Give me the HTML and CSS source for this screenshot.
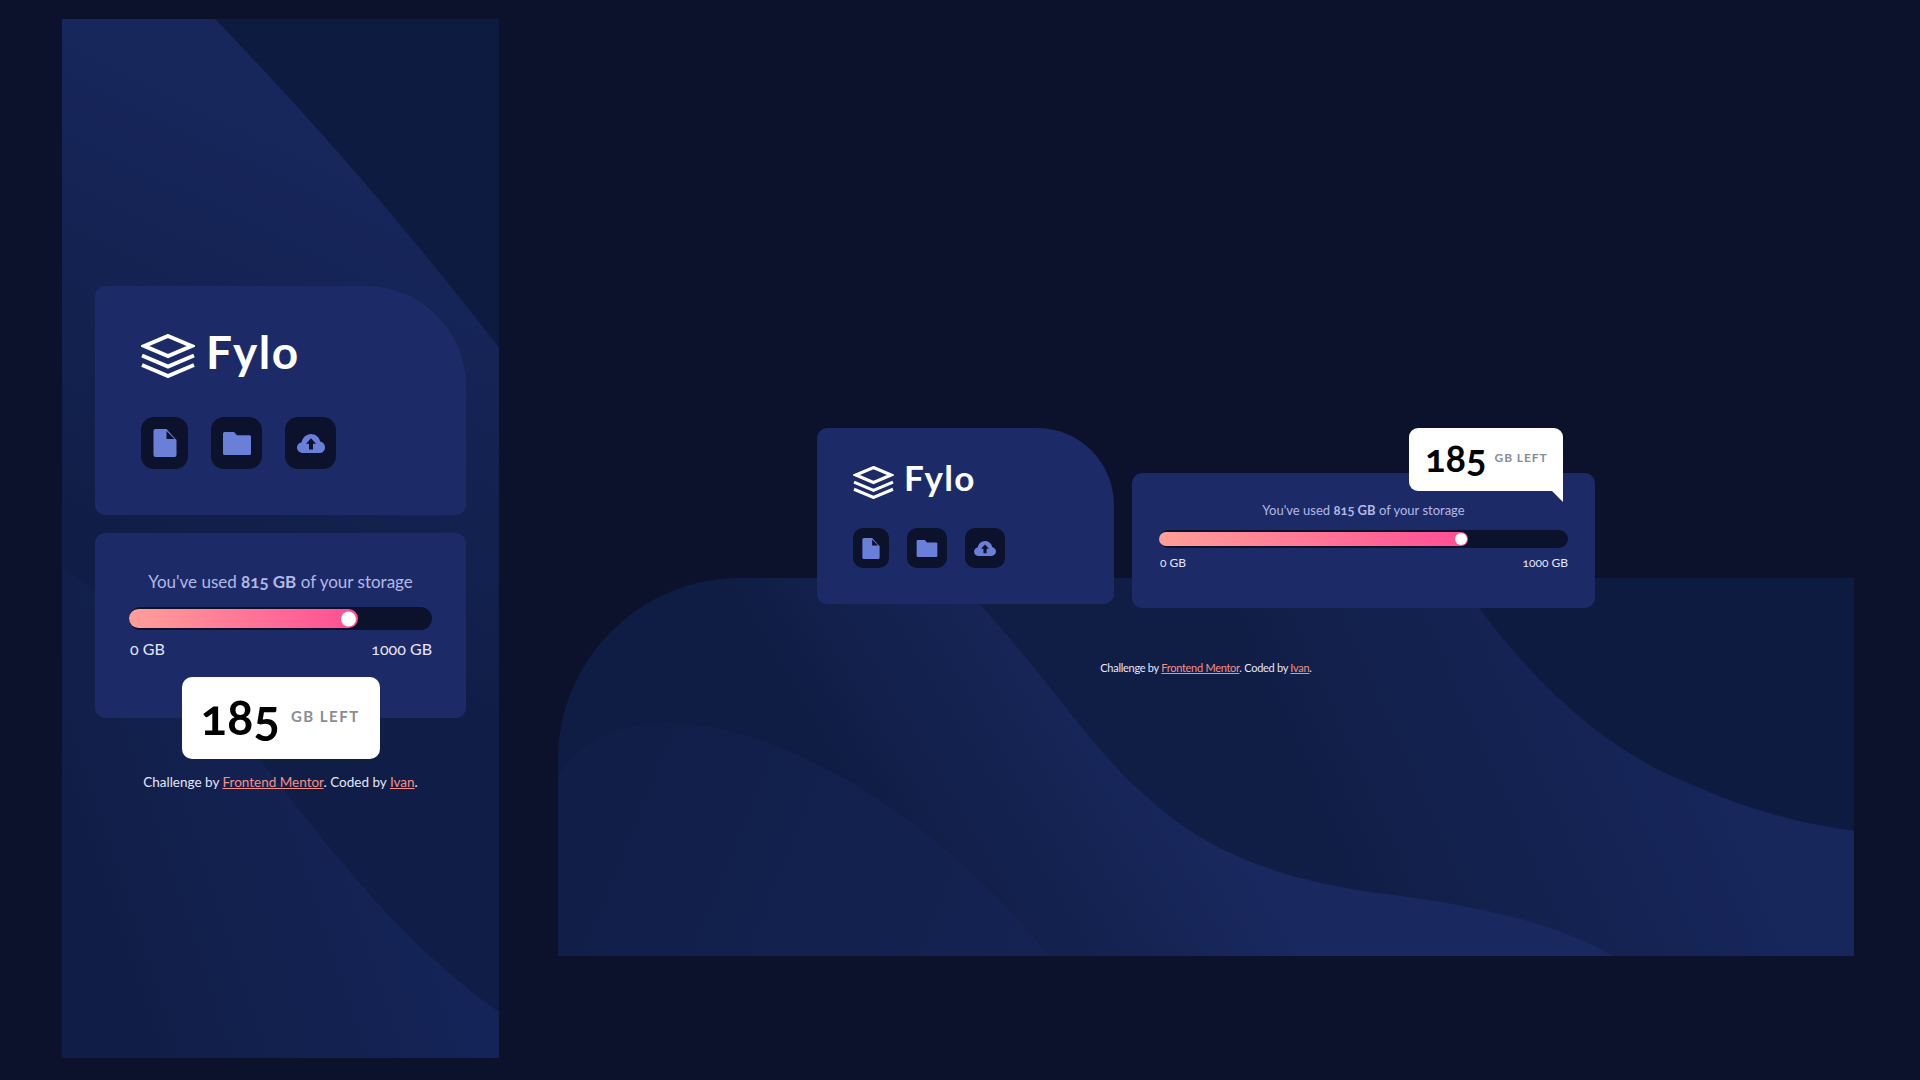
FILE: index.html
```html
<!DOCTYPE html>
<html lang="en">
<head>
    <meta charset="UTF-8">
    <meta name="viewport" content="width=device-width, initial-scale=1.0">
    <title>Fylo data storage component</title>
    <link rel="stylesheet" href="styles.css">
</head>
<body>
    <section class="preview mobile">
        <svg class="waves" viewBox="0 0 437 1039" width="437" height="1039" aria-hidden="true">
            <defs>
                <linearGradient id="m1" gradientUnits="userSpaceOnUse" x1="340" y1="170" x2="150" y2="560">
                    <stop offset="0" stop-color="#17265b"/>
                    <stop offset="1" stop-color="#101e47"/>
                </linearGradient>
                <linearGradient id="m2" gradientUnits="userSpaceOnUse" x1="20" y1="820" x2="320" y2="720">
                    <stop offset="0" stop-color="#101e47"/>
                    <stop offset="1" stop-color="#152458"/>
                </linearGradient>
            </defs>
            <rect width="437" height="1039" fill="#0e1b40"/>
            <path fill="url(#m1)" d="M0 0H153C230 80 330 190 437 329V1039H0Z"/>
            <path fill="url(#m2)" d="M0 550C70 590 150 680 224 774C290 860 360 940 437 993V1039H0Z"/>
        </svg>

        <div class="card card-logo">
            <div class="logo">
                <svg class="logo-mark" viewBox="0 0 54 44"><path d="M27 2L50.500 12 27 22 3.500 12Z M1 21.500L27 32.500 53 21.500 M1 31L27 42 53 31"/></svg>
                <span class="logo-text">Fylo</span>
            </div>
            <div class="icons">
                <span class="icon-btn"><svg class="icon-file" viewBox="0 0 23 28"><path class="ico" d="M2 0H13L23 11V26A2 2 0 0 1 21 28H2A2 2 0 0 1 0 26V2A2 2 0 0 1 2 0Z"/><path class="ico-cut" d="M13 2L21 10H13Z"/></svg></span>
                <span class="icon-btn"><svg class="icon-folder" viewBox="0 0 28 23"><path class="ico" d="M1.500 0H11L14 3.300H26.500A1.500 1.500 0 0 1 28 4.800V21.500A1.500 1.500 0 0 1 26.500 23H1.500A1.500 1.500 0 0 1 0 21.500V1.500A1.500 1.500 0 0 1 1.500 0Z"/></svg></span>
                <span class="icon-btn"><svg class="icon-cloud" viewBox="0 0 28 19"><path class="ico" d="M6 19C2.700 19 0 16.600 0 13.500 0 10.800 2 8.700 4.600 8.200 5.600 3.600 9.400 0 14 0 18.600 0 22.300 3.200 23.200 7.500 26 8.200 28 10.500 28 13.400 28 16.500 25.400 19 22.200 19Z"/><path class="ico-cut" d="M14 4.300L19 9.800H16V15.500H12V9.800H9Z"/></svg></span>
            </div>
        </div>

        <div class="card card-storage">
            <p class="used">You've used <strong>815 GB</strong> of your storage</p>
            <div class="bar"><div class="fill" style="width: 75.500%"></div></div>
            <div class="scale"><span>0 GB</span><span>1000 GB</span></div>
        </div>
        <div class="left-box"><span class="left-num">185</span><span class="left-unit">GB LEFT</span></div>

        <p class="credit">Challenge by <a href="#">Frontend Mentor</a>. Coded by <a href="#">Ivan</a>.</p>
    </section>

    <section class="preview desktop">
        <svg class="waves" viewBox="0 0 1296 378" width="1296" height="378" aria-hidden="true">
            <defs>
                <linearGradient id="d1" gradientUnits="userSpaceOnUse" x1="800" y1="350" x2="1160" y2="190">
                    <stop offset="0" stop-color="#101e46"/>
                    <stop offset="1" stop-color="#17265b"/>
                </linearGradient>
                <linearGradient id="d2" gradientUnits="userSpaceOnUse" x1="350" y1="330" x2="620" y2="170">
                    <stop offset="0" stop-color="#0f1d44"/>
                    <stop offset="1" stop-color="#19285e"/>
                </linearGradient>
                <linearGradient id="d3" gradientUnits="userSpaceOnUse" x1="60" y1="200" x2="480" y2="370">
                    <stop offset="0" stop-color="#101e48"/>
                    <stop offset="1" stop-color="#142352"/>
                </linearGradient>
            </defs>
            <rect width="1296" height="378" fill="#0e1b40"/>
            <path fill="url(#d1)" d="M0 0H900C960 90 1040 170 1130 205C1190 232 1240 245 1296 253V378H0Z"/>
            <path fill="url(#d2)" d="M0 0H395C470 70 530 170 590 220C650 275 720 300 812 314C900 325 990 340 1055 378H0Z"/>
            <path fill="url(#d3)" d="M0 200C20 160 70 143 116 145C230 150 380 240 491 378H0Z"/>
        </svg>

        <div class="cards">
            <div class="card card-logo">
                <div class="logo">
                    <svg class="logo-mark" viewBox="0 0 54 44"><path d="M27 2L50.500 12 27 22 3.500 12Z M1 21.500L27 32.500 53 21.500 M1 31L27 42 53 31"/></svg>
                    <span class="logo-text">Fylo</span>
                </div>
                <div class="icons">
                    <span class="icon-btn"><svg class="icon-file" viewBox="0 0 23 28"><path class="ico" d="M2 0H13L23 11V26A2 2 0 0 1 21 28H2A2 2 0 0 1 0 26V2A2 2 0 0 1 2 0Z"/><path class="ico-cut" d="M13 2L21 10H13Z"/></svg></span>
                    <span class="icon-btn"><svg class="icon-folder" viewBox="0 0 28 23"><path class="ico" d="M1.500 0H11L14 3.300H26.500A1.500 1.500 0 0 1 28 4.800V21.500A1.500 1.500 0 0 1 26.500 23H1.500A1.500 1.500 0 0 1 0 21.500V1.500A1.500 1.500 0 0 1 1.500 0Z"/></svg></span>
                    <span class="icon-btn"><svg class="icon-cloud" viewBox="0 0 28 19"><path class="ico" d="M6 19C2.700 19 0 16.600 0 13.500 0 10.800 2 8.700 4.600 8.200 5.600 3.600 9.400 0 14 0 18.600 0 22.300 3.200 23.200 7.500 26 8.200 28 10.500 28 13.400 28 16.500 25.400 19 22.200 19Z"/><path class="ico-cut" d="M14 4.300L19 9.800H16V15.500H12V9.800H9Z"/></svg></span>
                </div>
            </div>

            <div class="card card-storage">
                <p class="used">You've used <strong>815 GB</strong> of your storage</p>
                <div class="bar"><div class="fill" style="width: 75.500%"></div></div>
                <div class="scale"><span>0 GB</span><span>1000 GB</span></div>
                <div class="left-box"><span class="left-num">185</span><span class="left-unit">GB LEFT</span></div>
            </div>
        </div>

        <p class="credit">Challenge by <a href="#">Frontend Mentor</a>. Coded by <a href="#">Ivan</a>.</p>
    </section>
</body>
</html>
```

FILE: styles.css
```css
* {
  box-sizing: border-box;
}

body {
  margin: 0;
  height: 1080px;
  overflow: hidden;
  display: flex;
  align-items: flex-start;
  padding-left: 62px;
  background-color: #0c122c;
  font-family: Lato, "Open Sans", sans-serif;
  font-variant-numeric: oldstyle-nums;
  color: #fff;
}

p {
  margin: 0;
}

.preview {
  position: relative;
}

.waves {
  position: absolute;
  left: 0;
  top: 0;
  display: block;
}

/* cards */
.card {
  position: relative;
  background-color: #1c2b68;
  border-radius: 10px;
}

.logo {
  display: flex;
  align-items: center;
}

.logo-mark path {
  fill: none;
  stroke: #fff;
  stroke-width: 4;
}

.logo-mark {
  display: block;
}

.logo-text {
  font-weight: 700;
  line-height: 1;
}

.icons {
  display: flex;
}

.icon-btn {
  display: flex;
  align-items: center;
  justify-content: center;
  background-color: #0c122c;
}

.icon-btn svg {
  display: block;
}

.ico {
  fill: #6a7fd8;
}

.ico-cut {
  fill: #0c122c;
}

.used {
  text-align: center;
  color: #b4b8e4;
}

.bar {
  background-color: #0c122c;
}

.fill {
  position: relative;
  height: 100%;
  background: linear-gradient(to right, #ff9f99, #ff4d94);
}

.fill::after {
  content: "";
  position: absolute;
  top: 50%;
  transform: translateY(-50%);
  border-radius: 50%;
  background-color: #fff;
}

.scale {
  display: flex;
  justify-content: space-between;
  color: #e6e6ff;
}

.left-box {
  display: flex;
  align-items: center;
  background-color: #fff;
  color: #000;
}

.left-num {
  font-weight: 700;
  line-height: 1;
}

.left-unit {
  font-weight: 700;
  color: #8a8c97;
}

.credit {
  position: relative;
  text-align: center;
  color: #e6e6ff;
}

.credit a {
  color: #f78f87;
}

/* phone sized preview */
.mobile {
  width: 437px;
  height: 1039px;
  margin-top: 19px;
  padding: 267px 33px 0;
}

.mobile .card-logo {
  height: 229px;
  padding: 48px 46px 0;
  border-top-right-radius: 100px;
}

.mobile .logo {
  height: 44px;
}

.mobile .logo-mark {
  width: 54px;
  height: 44px;
  margin-right: 11px;
}

.mobile .logo-text {
  font-size: 46px;
  letter-spacing: 1.500px;
  margin-bottom: 8px;
}

.mobile .icons {
  margin-top: 39px;
  gap: 23px;
}

.mobile .icon-btn {
  height: 52px;
  padding: 0 11.500px;
  border-radius: 13px;
}

.mobile .icon-file {
  width: 24px;
  height: 28px;
}

.mobile .icon-folder {
  width: 28px;
  height: 23px;
}

.mobile .icon-cloud {
  width: 28px;
  height: 19px;
}

.mobile .card-storage {
  height: 185px;
  margin-top: 18px;
  padding: 38px 34px 0;
}

.mobile .used {
  font-size: 17px;
  line-height: 22px;
}

.mobile .bar {
  height: 23px;
  margin-top: 14px;
  padding: 2px 0;
  border-radius: 12px;
}

.mobile .fill {
  border-radius: 10px;
}

.mobile .fill::after {
  right: 2px;
  width: 15px;
  height: 15px;
}

.mobile .scale {
  margin-top: 9px;
  padding-left: 1px;
  font-size: 16px;
  line-height: 20px;
}

.mobile .left-box {
  width: 198px;
  height: 82px;
  margin: -41px auto 0;
  position: relative;
  padding: 0 0 4px 19px;
  border-radius: 10px;
}

.mobile .left-num {
  font-size: 49px;
  margin-right: 11px;
}

.mobile .left-unit {
  font-size: 15px;
  letter-spacing: 1.500px;
}

.mobile .credit {
  margin-top: 14px;
  font-size: 13.500px;
  line-height: 18px;
}

/* desktop sized preview */
.desktop {
  width: 1296px;
  height: 1080px;
  margin-left: 59px;
  padding-top: 428px;
}

.desktop .waves {
  top: 578px;
  border-top-left-radius: 183px;
}

.cards {
  position: relative;
  display: flex;
  align-items: flex-start;
  justify-content: center;
  gap: 18px;
}

.desktop .card-logo {
  width: 297px;
  height: 176px;
  padding: 38px 36px 0;
  border-top-right-radius: 77px;
}

.desktop .logo {
  height: 33px;
}

.desktop .logo-mark {
  width: 41px;
  height: 33px;
  margin-right: 10px;
}

.desktop .logo-text {
  font-size: 35px;
  letter-spacing: 1.200px;
  margin-bottom: 10px;
}

.desktop .icons {
  margin-top: 29px;
  gap: 18px;
}

.desktop .icon-btn {
  height: 40px;
  padding: 0 9px;
  border-radius: 10px;
}

.desktop .icon-file {
  width: 18px;
  height: 21px;
}

.desktop .icon-folder {
  width: 22px;
  height: 17px;
}

.desktop .icon-cloud {
  width: 22px;
  height: 15px;
}

.desktop .card-storage {
  width: 463px;
  height: 135px;
  margin-top: 45px;
  padding: 28px 27px 0;
}

.desktop .used {
  font-size: 13px;
  line-height: 18px;
}

.desktop .bar {
  height: 18px;
  margin-top: 11px;
  padding: 2px 0;
  border-radius: 9px;
}

.desktop .fill {
  border-radius: 8px;
}

.desktop .fill::after {
  right: 1px;
  width: 12px;
  height: 12px;
}

.desktop .scale {
  margin-top: 7px;
  padding-left: 1px;
  font-size: 12px;
  line-height: 16px;
}

.desktop .left-box {
  position: absolute;
  top: -45px;
  right: 32px;
  width: 154px;
  height: 63px;
  padding: 0 0 5px 16px;
  border-radius: 9px 9px 0 9px;
}

.desktop .left-box::after {
  content: "";
  position: absolute;
  right: 0;
  top: 100%;
  border-top: 11px solid #fff;
  border-left: 11px solid transparent;
}

.desktop .left-num {
  font-size: 38px;
  margin-right: 8px;
}

.desktop .left-unit {
  font-size: 12px;
  letter-spacing: 0.900px;
}

.desktop .credit {
  margin-top: 52px;
  font-size: 11px;
  letter-spacing: -0.280px;
  line-height: 16px;
}
```
